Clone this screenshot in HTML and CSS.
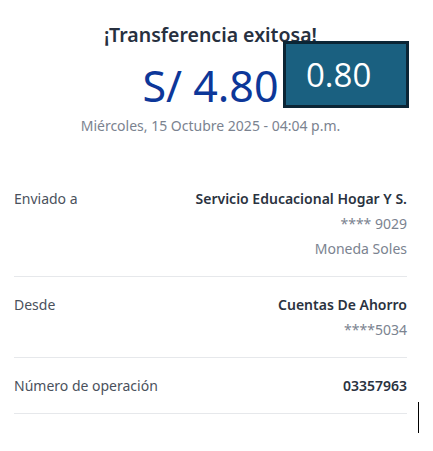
FILE: index.html
```html
<!DOCTYPE html>
<html lang="es">
<head>
  <meta charset="UTF-8" />
  <meta name="viewport" content="width=device-width, initial-scale=1.0"/>
  <title>Transferencia exitosa</title>
  <link rel="stylesheet" href="styles.css">
</head>
<body>
<div class="container">
  <header class="resumen">
    <h1>¡Transferencia exitosa!</h1>
    <p class="monto">S/ 4.80</p>
    <p class="fecha">Miércoles, 15 Octubre 2025 - 04:04 p.m.</p>
    <div class="etiqueta">0.80</div>
  </header>

  <div class="detalle">
    <div class="fila">
      <span class="label">Enviado a</span>
      <div class="valor">
        <strong>Servicio Educacional Hogar Y S.</strong>
        <span>**** 9029</span>
        <span>Moneda Soles</span>
      </div>
    </div>
    <div class="fila">
      <span class="label">Desde</span>
      <div class="valor">
        <strong>Cuentas De Ahorro</strong>
        <span>****5034</span>
      </div>
    </div>
    <div class="fila">
      <span class="label">Número de operación</span>
      <div class="valor">
        <strong>03357963</strong>
      </div>
    </div>
  </div>
</div>
<div class="cursor"></div>
</body>
</html>
```
FILE: styles.css
```css
body {
  font-family: 'Noto Sans', sans-serif;
  background: #fff;
  color: #3a4250;
  margin: 0;
  padding: 0;
  min-height: 451px;
  position: relative;
}
.container {
  margin: 0 26px 0 14px;
}
.resumen {
  text-align: center;
  padding-top: 20px;
  height: 150px;
  box-sizing: border-box;
  position: relative;
}
h1 {
  font-size: 19.5px;
  font-weight: 600;
  color: #27303f;
  margin: 0;
  line-height: 30px;
}
.monto {
  font-size: 43px;
  font-weight: 400;
  color: #0d3799;
  margin: 11px 0 0;
  line-height: 50px;
}
.fecha {
  font-size: 14px;
  color: #7b8390;
  margin: 5px 0 0;
  line-height: 20px;
}
.etiqueta {
  position: absolute;
  left: 269px;
  top: 41px;
  width: 120px;
  height: 61px;
  background: #1a6080;
  border: 3px solid #0b2535;
  color: #fff;
  font-family: 'Open Sans', sans-serif;
  font-size: 33px;
  line-height: 61px;
  text-align: left;
  text-indent: 20px;
}
.detalle {
  margin-top: 21px;
}
.fila {
  display: flex;
  justify-content: space-between;
  padding: 15px 0 15px;
  border-bottom: 1px solid #e6e8eb;
  font-size: 14px;
  line-height: 25px;
}
.label {
  color: #4a515c;
}
.valor {
  display: flex;
  flex-direction: column;
  align-items: flex-end;
  color: #7b8390;
}
.valor strong {
  color: #2a3240;
  font-weight: 600;
}
.cursor {
  position: absolute;
  left: 418px;
  top: 402px;
  width: 1px;
  height: 31px;
  background: #000;
}
```
